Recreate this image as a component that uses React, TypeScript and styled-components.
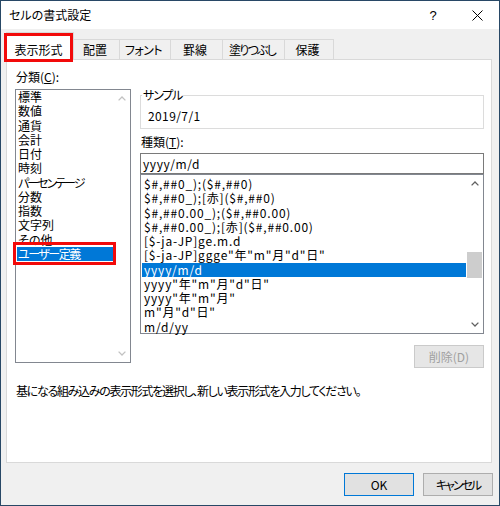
import React from "react";
import styled, { createGlobalStyle, css } from "styled-components";

const Global = createGlobalStyle`
  html, body { margin: 0; padding: 0; background: #fff; }
  body {
    font-family: "Noto Sans CJK JP", "Noto Sans", sans-serif;
    font-size: 12px;
    color: #000;
    font-feature-settings: "palt" 1;
  }
  * { box-sizing: border-box; }
`;

const Window = styled.div`
  width: 500px;
  height: 506px;
  border: 1px solid #284866;
  background: #f0f0f0;
  display: flex;
  flex-direction: column;
`;

const TitleBar = styled.div`
  flex: none;
  height: 28px;
  background: #fff;
  display: flex;
  align-items: center;
  padding-left: 8px;
`;

const TitleText = styled.div`
  flex: 1;
  line-height: 14px;
`;

const CaptionButton = styled.div`
  width: 44px;
  height: 28px;
  display: flex;
  align-items: center;
  justify-content: center;
  font-family: "Liberation Sans", sans-serif;
  font-size: 13px;
`;

const Body = styled.div`
  flex: 1;
  display: flex;
  flex-direction: column;
  padding: 0 7px 0 5px;
`;

const TabStrip = styled.div`
  flex: none;
  height: 31px;
  margin-bottom: -1px;
  display: flex;
  align-items: flex-start;
  position: relative;
  z-index: 1;
`;

const Tab = styled.div<{ $w: number; $ls: number; $active?: boolean }>`
  position: relative;
  width: ${(p) => p.$w}px;
  margin-left: -1px;
  border: 1px solid #d9d9d9;
  border-bottom: none;
  display: flex;
  align-items: center;
  justify-content: center;
  padding-right: 3px;
  line-height: 14px;
  letter-spacing: ${(p) => p.$ls}px;
  ${(p) =>
    p.$active
      ? css`
          margin-left: 0;
          height: 28px;
          margin-top: 3px;
          padding-top: 6px;
          background: #fff;
        `
      : css`
          height: 20px;
          margin-top: 10px;
          background: #f0f0f0;
        `}
`;

const RedBox = styled.div<{ $t: number; $r: number; $b: number; $l: number }>`
  position: absolute;
  top: ${(p) => p.$t}px;
  right: ${(p) => p.$r}px;
  bottom: ${(p) => p.$b}px;
  left: ${(p) => p.$l}px;
  border: 3px solid #f20a0a;
  pointer-events: none;
  z-index: 3;
`;

const Panel = styled.div`
  flex: none;
  height: 404px;
  background: #fff;
  border: 1px solid #d9d9d9;
  padding: 10px 6px 0 8px;
  display: flex;
  flex-direction: column;
`;

const Columns = styled.div`
  display: flex;
  gap: 9px;
  align-items: flex-start;
`;

const Column = styled.div<{ $w: number; $pt?: number }>`
  width: ${(p) => p.$w}px;
  display: flex;
  flex-direction: column;
  padding-top: ${(p) => p.$pt ?? 0}px;
`;

const Label = styled.div<{ $mt?: number; $mb?: number }>`
  line-height: 14px;
  height: 14px;
  padding-left: 1px;
  margin-top: ${(p) => p.$mt ?? 0}px;
  margin-bottom: ${(p) => p.$mb ?? 0}px;
  u { text-decoration: underline; text-underline-offset: 1px; }
`;

const ListBox = styled.div<{ $h: number }>`
  height: ${(p) => p.$h}px;
  border: 1px solid #828790;
  background: #fff;
  display: flex;
`;

const Items = styled.div<{ $pt?: number }>`
  flex: 1;
  display: flex;
  flex-direction: column;
  padding-top: ${(p) => p.$pt ?? 0}px;
  min-width: 0;
`;

const Item = styled.div<{ $selected?: boolean; $indent: number; $ls?: number }>`
  position: relative;
  height: 14.25px;
  line-height: 14.25px;
  margin-left: 1px;
  padding-left: ${(p) => p.$indent}px;
  white-space: nowrap;
  letter-spacing: ${(p) => p.$ls ?? 0}px;
  background: ${(p) => (p.$selected ? "#0078d7" : "transparent")};
  color: ${(p) => (p.$selected ? "#fff" : "#000")};
`;

const ScrollBar = styled.div`
  width: 17px;
  flex: none;
  display: flex;
  flex-direction: column;
  background: #fff;
`;

const ArrowBox = styled.div`
  height: 17px;
  flex: none;
  display: flex;
  align-items: center;
  justify-content: center;
`;

const Track = styled.div`
  flex: 1;
  display: flex;
  flex-direction: column;
`;

const Thumb = styled.div<{ $h: number }>`
  height: ${(p) => p.$h}px;
  margin: 0 1px;
  background: #cdcdcd;
`;

const GroupBox = styled.fieldset`
  margin: 0;
  padding: 7px 0 5px 7px;
  border: 1px solid #dcdcdc;
  min-width: 0;
  line-height: 14px;
  letter-spacing: 0.4px;
`;

const Legend = styled.legend`
  padding: 0 1px;
  margin-left: -6px;
  line-height: 14px;
  letter-spacing: -1.2px;
`;

const TextField = styled.div`
  height: 21px;
  border: 1px solid #7a7a7a;
  padding-left: 2px;
  display: flex;
  align-items: center;
  line-height: 14px;
  letter-spacing: 0.6px;
`;

const Button = styled.div<{ $variant?: "default" | "disabled"; $ls?: number }>`
  width: 70px;
  height: 23px;
  display: flex;
  align-items: center;
  justify-content: center;
  line-height: 14px;
  letter-spacing: ${(p) => p.$ls ?? 0}px;
  background: #e1e1e1;
  border: 1px solid #adadad;
  ${(p) =>
    p.$variant === "default" &&
    css`
      border-color: #0078d7;
    `}
  ${(p) =>
    p.$variant === "disabled" &&
    css`
      background: #e6e6e6;
      border-color: #cacaca;
      color: #a0a0a0;
    `}
`;

const DeleteRow = styled.div`
  display: flex;
  justify-content: flex-end;
  margin-top: 11px;
`;

const Description = styled.div`
  margin-top: 16px;
  padding-left: 1px;
  line-height: 14px;
  letter-spacing: -1.3px;
  white-space: nowrap;
`;

const ButtonRow = styled.div`
  margin-top: 10px;
  display: flex;
  justify-content: flex-end;
  gap: 9px;
  margin-right: -1px;
`;

const Chevron = ({ dir, color }: { dir: "up" | "down"; color: string }) => (
  <svg width="8" height="5" viewBox="0 0 8 5">
    <polyline
      points={dir === "up" ? "0.6,4.4 4,1 7.4,4.4" : "0.6,0.6 4,4 7.4,0.6"}
      fill="none"
      stroke={color}
      strokeWidth="1.3"
    />
  </svg>
);

const Scroller = ({
  color,
  offset,
  thumb,
}: {
  color: string;
  offset?: number;
  thumb?: number;
}) => (
  <ScrollBar>
    <ArrowBox>
      <Chevron dir="up" color={color} />
    </ArrowBox>
    <Track>
      {thumb ? (
        <>
          <div style={{ height: offset }} />
          <Thumb $h={thumb} />
        </>
      ) : null}
    </Track>
    <ArrowBox>
      <Chevron dir="down" color={color} />
    </ArrowBox>
  </ScrollBar>
);

const tabs: { label: string; w: number; ls: number }[] = [
  { label: "表示形式", w: 68, ls: 0 },
  { label: "配置", w: 47, ls: 0 },
  { label: "フォント", w: 52, ls: -0.5 },
  { label: "罫線", w: 53, ls: 0 },
  { label: "塗りつぶし", w: 63, ls: -1.8 },
  { label: "保護", w: 50, ls: 0 },
];

const categories: { label: string; ls: number }[] = [
  { label: "標準", ls: 0 },
  { label: "数値", ls: 0 },
  { label: "通貨", ls: 0 },
  { label: "会計", ls: 0 },
  { label: "日付", ls: 0 },
  { label: "時刻", ls: 0 },
  { label: "パーセンテージ", ls: -2 },
  { label: "分数", ls: 0 },
  { label: "指数", ls: 0 },
  { label: "文字列", ls: 0 },
  { label: "その他", ls: 0 },
  { label: "ユーザー定義", ls: -1.5 },
];

const formats = [
  "$#,##0_);($#,##0)",
  "$#,##0_);[赤]($#,##0)",
  "$#,##0.00_);($#,##0.00)",
  "$#,##0.00_);[赤]($#,##0.00)",
  "[$-ja-JP]ge.m.d",
  '[$-ja-JP]ggge"年"m"月"d"日"',
  "yyyy/m/d",
  'yyyy"年"m"月"d"日"',
  'yyyy"年"m"月"',
  'm"月"d"日"',
  "m/d/yy",
];

export default function App() {
  return (
    <>
      <Global />
      <Window>
        <TitleBar>
          <TitleText>セルの書式設定</TitleText>
          <CaptionButton>?</CaptionButton>
          <CaptionButton>
            <svg width="11" height="11" viewBox="0 0 11 11">
              <path d="M0.5 0.5 L10.5 10.5 M10.5 0.5 L0.5 10.5" stroke="#000" strokeWidth="1" />
            </svg>
          </CaptionButton>
        </TitleBar>
        <Body>
          <TabStrip>
            {tabs.map((t, i) => (
              <Tab key={t.label} $w={t.w} $ls={t.ls} $active={i === 0}>
                {t.label}
                {i === 0 && <RedBox $t={0} $r={0} $b={-2} $l={-3} />}
              </Tab>
            ))}
          </TabStrip>
          <Panel>
            <Columns>
              <Column $w={116}>
                <Label $mb={5}>
                  分類(<u>C</u>):
                </Label>
                <ListBox $h={274}>
                  <Items>
                    {categories.map((c, i) => (
                      <Item
                        key={c.label}
                        $indent={1}
                        $ls={c.ls}
                        $selected={i === categories.length - 1}
                      >
                        {c.label}
                        {i === categories.length - 1 && (
                          <RedBox $t={-5} $r={-3} $b={-4} $l={-4} />
                        )}
                      </Item>
                    ))}
                  </Items>
                  <Scroller color="#c2c2c2" />
                </ListBox>
              </Column>
              <Column $w={344} $pt={18}>
                <GroupBox>
                  <Legend>サンプル</Legend>
                  2019/7/1
                </GroupBox>
                <Label $mt={6} $mb={4}>
                  種類(<u>T</u>):
                </Label>
                <TextField>yyyy/m/d</TextField>
                <ListBox $h={160}>
                  <Items $pt={2}>
                    {formats.map((f, i) => (
                      <Item key={f} $indent={2} $ls={0.8} $selected={i === 6}>
                        {f}
                      </Item>
                    ))}
                  </Items>
                  <Scroller color="#606060" offset={60} thumb={26} />
                </ListBox>
                <DeleteRow>
                  <Button $variant="disabled">削除(D)</Button>
                </DeleteRow>
              </Column>
            </Columns>
            <Description>
              基になる組み込みの表示形式を選択し、新しい表示形式を入力してください。
            </Description>
          </Panel>
          <ButtonRow>
            <Button $variant="default">OK</Button>
            <Button $ls={-2}>キャンセル</Button>
          </ButtonRow>
        </Body>
      </Window>
    </>
  );
}
